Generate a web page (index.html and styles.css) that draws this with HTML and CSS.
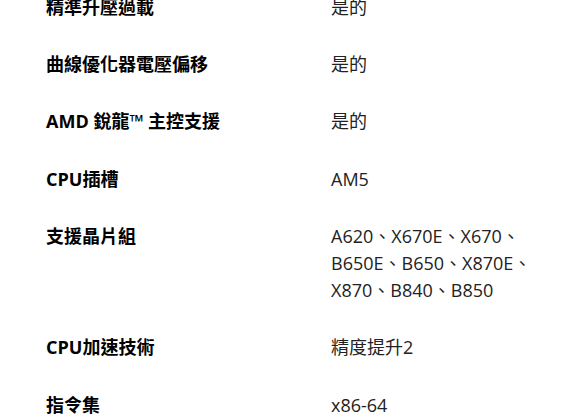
FILE: index.html
```html
<!DOCTYPE html>
<html lang="zh-Hant">

<head>
    <meta charset="UTF-8">
    <meta name="viewport" content="width=device-width, initial-scale=1.0">
    <title>規格</title>
    <link rel="stylesheet" href="styles.css">
</head>

<body>
    <div id="specs">
        <dl class="spec-list">
            <div class="spec-row">
                <dt>精準升壓過載</dt>
                <dd>是的</dd>
            </div>
            <div class="spec-row">
                <dt>曲線優化器電壓偏移</dt>
                <dd>是的</dd>
            </div>
            <div class="spec-row">
                <dt>AMD 銳龍™ 主控支援</dt>
                <dd>是的</dd>
            </div>
            <div class="spec-row">
                <dt>CPU插槽</dt>
                <dd>AM5</dd>
            </div>
            <div class="spec-row">
                <dt>支援晶片組</dt>
                <dd>A620、X670E、X670、B650E、B650、X870E、X870、B840、B850</dd>
            </div>
            <div class="spec-row">
                <dt>CPU加速技術</dt>
                <dd>精度提升2</dd>
            </div>
            <div class="spec-row">
                <dt>指令集</dt>
                <dd>x86-64</dd>
            </div>
        </dl>
    </div>
</body>
</html>
```

FILE: styles.css
```css
body {
    margin: 0;
    background-color: #fff;
    font-family: "Open Sans", "Noto Sans CJK TC", sans-serif;
    font-size: 18px;
    color: #000;
}

#specs {
    padding-left: 46px;
    margin-top: -21px;
}

.spec-list {
    margin: 0;
}

.spec-row {
    display: grid;
    grid-template-columns: 285px 222px;
    padding: 15px 0;
    line-height: 27.2px;
}

.spec-row dt {
    font-weight: 700;
    color: #000;
}

.spec-row dd {
    margin: 0;
    color: #222;
}
```
